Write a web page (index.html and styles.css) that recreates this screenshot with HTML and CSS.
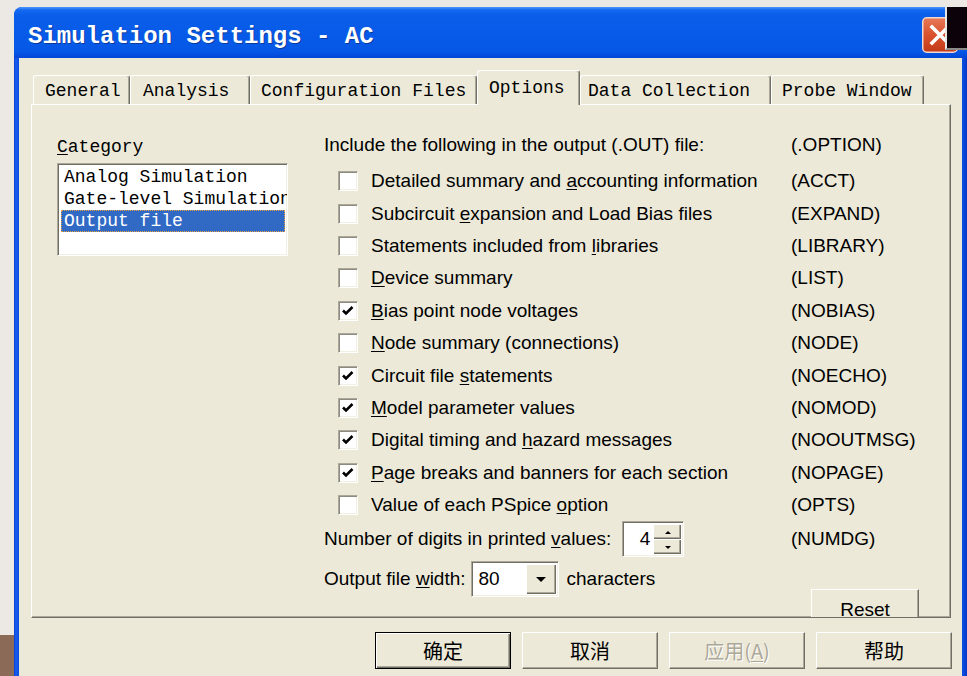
FILE: index.html
```html
<!DOCTYPE html>
<html lang="en">
<head>
<meta charset="utf-8">
<title>Simulation Settings - AC</title>
<link rel="stylesheet" href="styles.css">
</head>
<body>
<div class="screen">
  <div class="window">
    <div class="titlebar">
      <span class="title">Simulation Settings - AC</span>
      <span class="close-btn">
        <svg width="36" height="36" viewBox="0 0 36 36">
          <defs>
            <linearGradient id="closeFill" x1="0" y1="0" x2="0" y2="1">
              <stop offset="0" stop-color="#e77a58"/>
              <stop offset="0.5" stop-color="#d9512d"/>
              <stop offset="1" stop-color="#c33a18"/>
            </linearGradient>
          </defs>
          <rect x="0.75" y="0.75" width="34.5" height="34.5" rx="4" fill="url(#closeFill)" stroke="#f3d6cc" stroke-width="1.5"/>
          <path d="M10 10 L26 26 M26 10 L10 26" stroke="#fff" stroke-width="3.6" stroke-linecap="square"/>
        </svg>
      </span>
    </div>
    <div class="window-body">
      <div class="tabs">
        <div class="tab tab-general">General</div>
        <div class="tab tab-analysis">Analysis</div>
        <div class="tab tab-config">Configuration Files</div>
        <div class="tab tab-options active">Options</div>
        <div class="tab tab-data">Data Collection</div>
        <div class="tab tab-probe">Probe Window</div>
      </div>
      <div class="panel">
        <div class="category">
          <div class="category-label"><u>C</u>ategory</div>
          <div class="listbox">
            <div class="list-item">Analog Simulation</div>
            <div class="list-item">Gate-level Simulation</div>
            <div class="list-item selected">Output file</div>
          </div>
        </div>
        <div class="options">
          <div class="opt-row opt-header">
            <span>Include the following in the output (.OUT) file:</span>
            <span class="code">(.OPTION)</span>
          </div>
          <div class="opt-row">
            <label class="check-label"><span class="checkbox"></span><span>Detailed summary and <u>a</u>ccounting information</span></label>
            <span class="code">(ACCT)</span>
          </div>
          <div class="opt-row">
            <label class="check-label"><span class="checkbox"></span><span>Subcircuit <u>e</u>xpansion and Load Bias files</span></label>
            <span class="code">(EXPAND)</span>
          </div>
          <div class="opt-row">
            <label class="check-label"><span class="checkbox"></span><span>Statements included from <u>l</u>ibraries</span></label>
            <span class="code">(LIBRARY)</span>
          </div>
          <div class="opt-row">
            <label class="check-label"><span class="checkbox"></span><span><u>D</u>evice summary</span></label>
            <span class="code">(LIST)</span>
          </div>
          <div class="opt-row">
            <label class="check-label"><span class="checkbox checked"><svg width="16" height="16" viewBox="0 0 16 16"><path d="M3 7.5 L6 10.5 L12.5 4" fill="none" stroke="#000" stroke-width="2.6"/></svg></span><span><u>B</u>ias point node voltages</span></label>
            <span class="code">(NOBIAS)</span>
          </div>
          <div class="opt-row">
            <label class="check-label"><span class="checkbox"></span><span><u>N</u>ode summary (connections)</span></label>
            <span class="code">(NODE)</span>
          </div>
          <div class="opt-row">
            <label class="check-label"><span class="checkbox checked"><svg width="16" height="16" viewBox="0 0 16 16"><path d="M3 7.5 L6 10.5 L12.5 4" fill="none" stroke="#000" stroke-width="2.6"/></svg></span><span>Circuit file <u>s</u>tatements</span></label>
            <span class="code">(NOECHO)</span>
          </div>
          <div class="opt-row">
            <label class="check-label"><span class="checkbox checked"><svg width="16" height="16" viewBox="0 0 16 16"><path d="M3 7.5 L6 10.5 L12.5 4" fill="none" stroke="#000" stroke-width="2.6"/></svg></span><span><u>M</u>odel parameter values</span></label>
            <span class="code">(NOMOD)</span>
          </div>
          <div class="opt-row">
            <label class="check-label"><span class="checkbox checked"><svg width="16" height="16" viewBox="0 0 16 16"><path d="M3 7.5 L6 10.5 L12.5 4" fill="none" stroke="#000" stroke-width="2.6"/></svg></span><span>Digital timing and <u>h</u>azard messages</span></label>
            <span class="code">(NOOUTMSG)</span>
          </div>
          <div class="opt-row">
            <label class="check-label"><span class="checkbox checked"><svg width="16" height="16" viewBox="0 0 16 16"><path d="M3 7.5 L6 10.5 L12.5 4" fill="none" stroke="#000" stroke-width="2.6"/></svg></span><span><u>P</u>age breaks and banners for each section</span></label>
            <span class="code">(NOPAGE)</span>
          </div>
          <div class="opt-row">
            <label class="check-label"><span class="checkbox"></span><span>Value of each PSpice <u>o</u>ption</span></label>
            <span class="code">(OPTS)</span>
          </div>
          <div class="opt-row field-row">
            <div class="field">
              <span>Number of digits in printed <u>v</u>alues:</span>
              <span class="spin">
                <span class="spin-value">4</span>
                <span class="spin-buttons">
                  <span class="spin-btn"><span class="arrow-up"></span></span>
                  <span class="spin-btn"><span class="arrow-down"></span></span>
                </span>
              </span>
            </div>
            <span class="code">(NUMDG)</span>
          </div>
          <div class="opt-row field-row width-row">
            <div class="field">
              <span>Output file <u>w</u>idth:</span>
              <span class="combo">
                <span class="combo-value">80</span>
                <span class="combo-btn"><span class="arrow-drop"></span></span>
              </span>
              <span class="field-after">characters</span>
            </div>
            <div class="code reset-cell"><button class="btn reset-btn" type="button">Reset</button></div>
          </div>
        </div>
      </div>
      <div class="buttons">
        <button class="btn dlg-btn default" type="button">确定</button>
        <button class="btn dlg-btn" type="button">取消</button>
        <button class="btn dlg-btn disabled" type="button">应用(<u>A</u>)</button>
        <button class="btn dlg-btn" type="button">帮助</button>
      </div>
    </div>
  </div>
  <div class="other-window"></div>
</div>
</body>
</html>
```
FILE: styles.css
```css
* {
  box-sizing: border-box;
}

html,
body {
  margin: 0;
  padding: 0;
}

body {
  width: 967px;
  height: 676px;
  overflow: hidden;
  background: #ece8e4;
  font-family: "Liberation Sans", Arial, sans-serif;
}

/* desktop behind the dialog, with a strip of wallpaper at the lower left */
.screen {
  position: relative;
  width: 967px;
  height: 676px;
  overflow: hidden;
  padding: 7px 0 0 14px;
  background:
    linear-gradient(#8b6a57, #8b6a57) 0 635px / 14px 41px no-repeat,
    #ece8e4;
}

/* window frame */
.window {
  width: 953px;
  height: 669px;
  display: flex;
  flex-direction: column;
  border-radius: 8px 8px 0 0;
  overflow: hidden;
  background: linear-gradient(90deg, #0a3fd0 0, #1a5ff0 2px, #0a4ee2 4px, #0a4ee2 calc(100% - 4px), #0836c4 100%);
}

.titlebar {
  flex: none;
  height: 51px;
  display: flex;
  align-items: flex-start;
  justify-content: space-between;
  padding: 0 9px 0 14px;
  background: linear-gradient(#4b97fb 0, #1468f0 3px, #0a5ee9 8px, #075be8 50%, #0657e6 88%, #0346d6 100%);
}

.title {
  margin-top: 18px;
  font: bold 24px/24px "Liberation Mono", monospace;
  color: #fff;
  white-space: pre;
  text-shadow: 1px 1px 0 #0b3a9c;
}

.close-btn {
  margin-top: 10px;
  width: 36px;
  height: 36px;
  display: block;
}

.close-btn svg {
  display: block;
}

/* dialog client area */
.window-body {
  flex: 1;
  margin: 0 5px;
  background: #ece9d8;
  display: flex;
  flex-direction: column;
  padding: 12px 11px 0 12px;
}

/* tab strip */
.tabs {
  position: relative;
  z-index: 1;
  display: flex;
  align-items: flex-end;
  height: 34px;
  padding-left: 2px;
  font: 18px/18px "Liberation Mono", monospace;
  color: #000;
}

.tab {
  height: 29px;
  padding: 6px 0 0 11px;
  border-top: 1px solid #fff;
  border-left: 1px solid #fff;
  border-right: 1px solid #716f64;
  border-radius: 3px 3px 0 0;
  box-shadow: inset -1px 0 #aca899;
  white-space: pre;
  background: #ece9d8;
}

.tab-general { width: 97px; }
.tab-analysis { width: 120px; padding-left: 12px; }
.tab-config { width: 227px; padding-left: 10px; }
.tab-options { width: 103px; }
.tab-data { width: 191px; padding-left: 7px; }
.tab-probe { width: 153px; padding-left: 10px; }

.tab.active {
  height: 35px;
  margin-bottom: -1px;
  padding-top: 8px;
}

/* tab page */
.panel {
  width: 920px;
  height: 514px;
  border: 1px solid;
  border-color: #fff #716f64 #716f64 #fff;
  box-shadow: inset -1px -1px #aca899;
  display: grid;
  grid-template-columns: 267px 1fr;
  align-items: start;
  padding: 28px 0 0 25px;
  overflow: hidden;
  color: #000;
}

.category {
  padding-top: 4px;
  font: 18px/20px "Liberation Mono", monospace;
}

.category-label {
  height: 20px;
}

.listbox {
  margin-top: 6px;
  width: 231px;
  height: 93px;
  border: 1px solid;
  border-color: #aca899 #fff #fff #aca899;
  box-shadow: inset 1px 1px #716f64, inset -1px -1px #f1efe2;
  background: #fff;
  padding: 2px 2px 0 3px;
  overflow: hidden;
  line-height: 22px;
}

.list-item {
  height: 22px;
  padding-left: 3px;
  white-space: nowrap;
}

.list-item.selected {
  background: #316ac5;
  color: #fff;
  outline: 1px dotted #e9a441;
  outline-offset: -1px;
}

/* option list */
.options {
  font-size: 19px;
  line-height: 24px;
}

.opt-row {
  display: grid;
  grid-template-columns: 467px auto;
  align-items: center;
  height: 32.4px;
  white-space: nowrap;
}

.opt-row.opt-header {
  height: 24px;
  margin-bottom: 8px;
}

.check-label {
  display: flex;
  align-items: center;
}

.checkbox {
  flex: none;
  width: 20px;
  height: 20px;
  margin: 0 13px 0 14px;
  border: 1px solid;
  border-color: #aca899 #fff #fff #aca899;
  box-shadow: inset 1px 1px #8d8b80, inset -1px -1px #f1efe2;
  background: #fff;
  display: flex;
  align-items: center;
  justify-content: center;
}

.checkbox svg {
  display: block;
}

.field-row {
  height: 36px;
}

.width-row {
  height: auto;
  margin-top: 4px;
  align-items: start;
}

.field {
  display: flex;
  align-items: center;
  height: 36px;
}

.spin {
  margin-left: 11px;
  display: flex;
  width: 62px;
  height: 36px;
  border: 1px solid;
  border-color: #aca899 #fff #fff #aca899;
  box-shadow: inset 1px 1px #716f64, inset -1px -1px #f1efe2;
  background: #fff;
  padding: 2px;
}

.spin-value {
  flex: 1;
  text-align: right;
  padding-right: 3px;
  line-height: 30px;
}

.spin-buttons {
  width: 28px;
  display: flex;
  flex-direction: column;
}

.spin-btn {
  flex: 1;
  background: #ece9d8;
  border-top: 1px solid #fff;
  border-left: 1px solid #fff;
  box-shadow: inset -1px -1px #716f64, inset -2px -2px #aca899;
  display: flex;
  align-items: center;
  justify-content: center;
}

.arrow-up,
.arrow-down {
  width: 0;
  height: 0;
  border-left: 3px solid transparent;
  border-right: 3px solid transparent;
}

.arrow-up {
  border-bottom: 3px solid #000;
}

.arrow-down {
  border-top: 3px solid #000;
}

.combo {
  margin-left: 5px;
  display: flex;
  width: 88px;
  height: 36px;
  border: 1px solid;
  border-color: #aca899 #fff #fff #aca899;
  box-shadow: inset 1px 1px #716f64, inset -1px -1px #f1efe2;
  background: #fff;
  padding: 2px;
}

.combo-value {
  flex: 1;
  padding-left: 5px;
  line-height: 30px;
}

.combo-btn {
  width: 30px;
  background: #ece9d8;
  border-top: 1px solid #fff;
  border-left: 1px solid #fff;
  box-shadow: inset -1px -1px #716f64, inset -2px -2px #aca899;
  display: flex;
  align-items: center;
  justify-content: center;
}

.arrow-drop {
  width: 0;
  height: 0;
  border-left: 5px solid transparent;
  border-right: 5px solid transparent;
  border-top: 5px solid #000;
}

.field-after {
  margin-left: 8px;
}

/* push buttons */
.btn {
  font: inherit;
  color: #000;
  background: #ece9d8;
  border: 1px solid;
  border-color: #fff #716f64 #716f64 #fff;
  box-shadow: inset -1px -1px #aca899;
  padding: 0;
  margin: 0;
}

.reset-cell {
  padding: 28px 0 0 20px;
}

.reset-btn {
  display: block;
  width: 108px;
  height: 38px;
  padding-top: 4px;
  font-size: 19px;
}

.buttons {
  margin-top: 14px;
  display: flex;
  justify-content: flex-end;
  gap: 11px;
  margin-right: -1px;
}

.dlg-btn {
  width: 136px;
  height: 37px;
  font: 20px/1 "Noto Sans CJK SC", "Liberation Sans", sans-serif;
}

.dlg-btn.default {
  border: 1px solid #000;
  box-shadow: inset 1px 1px #fff, inset -1px -1px #716f64, inset -2px -2px #aca899;
}

.dlg-btn.disabled {
  color: #aca899;
  text-shadow: 1px 1px 0 #fff;
}

u {
  text-decoration-thickness: 1px;
  text-underline-offset: 2px;
}

/* another window poking in over the title bar corner */
.other-window {
  position: absolute;
  top: 7px;
  right: 0;
  width: 22px;
  height: 43px;
  background: #0b0309;
  border-left: 2px solid #e8e6e2;
  border-bottom: 2px solid #8c8a86;
}
```
